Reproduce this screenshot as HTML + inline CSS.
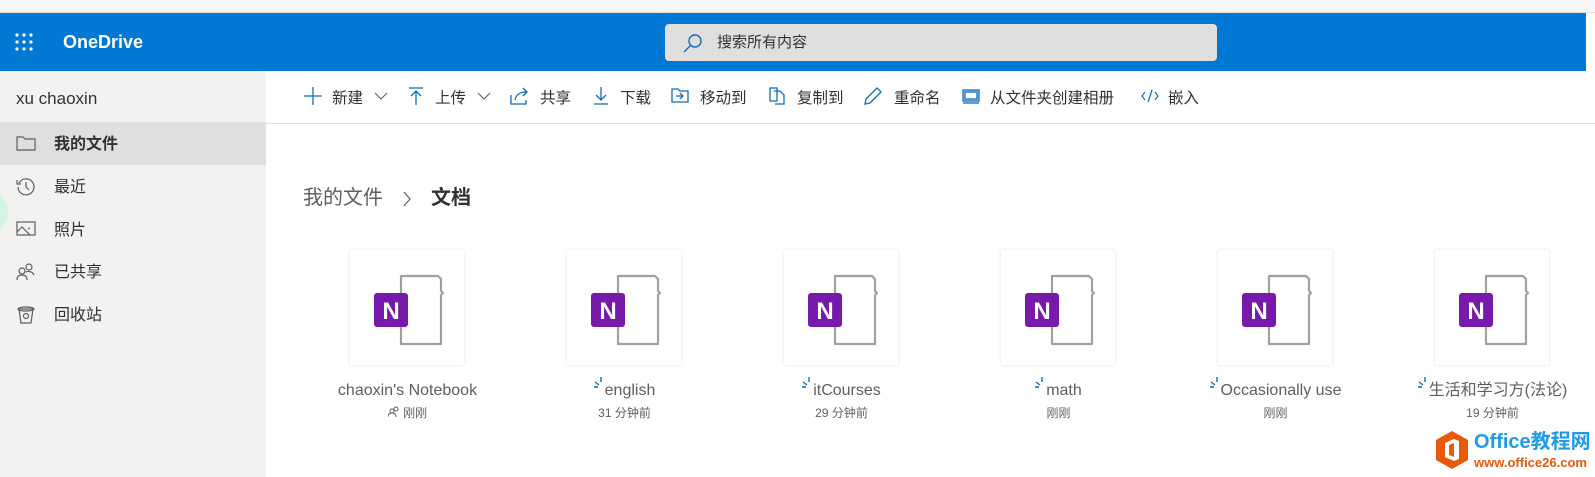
<!DOCTYPE html>
<html><head><meta charset="utf-8"><style>
*{margin:0;padding:0;box-sizing:border-box}
body{width:1595px;height:477px;overflow:hidden;background:#fff;font-family:"Liberation Sans","Noto Sans CJK SC",sans-serif;position:relative;color:#323130}
.top{position:absolute;left:0;top:0;width:1595px;height:13px;background:#f6f6f6;border-bottom:1px solid #e0e0e0}
.bar{position:absolute;left:0;top:13px;width:1586px;height:58px;background:#0078d4}
.brand{position:absolute;left:63px;top:32px;color:#fff;font-size:18px;font-weight:bold}
.search{position:absolute;left:665px;top:24px;width:552px;height:37px;background:#e1dfdd;border-radius:4px}
.search span{position:absolute;left:52px;top:9px;font-size:15px;line-height:20px;color:#323130}
.side{position:absolute;left:0;top:71px;width:266px;height:406px;background:#f3f2f1;overflow:hidden}
.user{position:absolute;left:16px;top:17px;font-size:17px;line-height:22px}
.item{position:absolute;left:0;width:266px;height:43px}
.item span{position:absolute;left:54px;top:12px;font-size:16px;line-height:22px}
.item svg{position:absolute;left:16px;top:12px}
.tb{position:absolute;left:266px;top:71px;width:1329px;height:53px;border-bottom:1px solid #e1dfdd}
.tb .b{position:absolute;top:17px;font-size:15.5px;line-height:22px;color:#323130;white-space:nowrap}
.tb svg{position:absolute;top:16px}
.bc{position:absolute;top:184px;font-size:20px;line-height:28px}
.tile{position:absolute;top:250px;width:114px;height:115px;background:#fff;box-shadow:0 0 3px rgba(0,0,0,.12)}
.tile svg{position:absolute;left:22px;top:22px}
.nm{position:absolute;top:380px;width:217px;text-align:center;font-size:16px;line-height:22px;color:#605e5c;white-space:nowrap}
.tm{position:absolute;top:405px;width:217px;text-align:center;font-size:12px;line-height:16px;color:#605e5c}
.sync{display:inline-block;width:10px;height:12px;position:relative;top:-6px;margin-right:1px}
</style></head><body>
<div class="top"></div>
<div class="bar"></div>
<svg style="position:absolute;left:15px;top:33px" width="20" height="18"><g fill="#fff"><circle cx="2" cy="2" r="1.6"/><circle cx="9" cy="2" r="1.6"/><circle cx="16" cy="2" r="1.6"/><circle cx="2" cy="9" r="1.6"/><circle cx="9" cy="9" r="1.6"/><circle cx="16" cy="9" r="1.6"/><circle cx="2" cy="16" r="1.6"/><circle cx="9" cy="16" r="1.6"/><circle cx="16" cy="16" r="1.6"/></g></svg>
<div class="brand">OneDrive</div>
<div class="search"><svg style="position:absolute;left:18px;top:10px" width="20" height="20" fill="none" stroke="#0f6cbd" stroke-width="1.4"><circle cx="12" cy="7" r="6"/><path d="M7.5 11.5L1 18"/></svg><span>搜索所有内容</span></div>

<div class="side">
<div class="user">xu chaoxin</div>
<div class="item" style="top:51px;background:#e1dfdd"><svg width="20" height="18" fill="none" stroke="#605e5c" stroke-width="1.2"><path d="M1 3h6l2 2h10v11H1z"/></svg><span style="font-weight:bold">我的文件</span></div>
<div class="item" style="top:94px"><svg width="20" height="20" fill="none" stroke="#605e5c" stroke-width="1.2"><path d="M3 6A8 8 0 1 1 2 10M1 3v4h4M10 5v5l3 3"/></svg><span>最近</span></div>
<div class="item" style="top:137px"><svg width="20" height="18" fill="none" stroke="#605e5c" stroke-width="1.2"><rect x="1" y="2" width="18" height="13"/><path d="M1 12l5-5 8 8M12 9l2-1"/></svg><span>照片</span></div>
<div class="item" style="top:179px"><svg width="20" height="20" fill="none" stroke="#605e5c" stroke-width="1.2"><circle cx="6" cy="9" r="3"/><circle cx="13" cy="5" r="3"/><path d="M1 18c0-4 2-5 5-5s5 1 5 5M10 10c2-1 6-1 8 3"/></svg><span>已共享</span></div>
<div class="item" style="top:222px"><svg width="20" height="20" fill="none" stroke="#605e5c" stroke-width="1.2"><path d="M2 4h16M3 4l2 14h10l2-14"/><ellipse cx="10" cy="4" rx="8" ry="2"/><circle cx="10" cy="11" r="2.5"/></svg><span>回收站</span></div>
<div style="position:absolute;left:-40px;top:117px;width:48px;height:48px;border-radius:50%;background:#d4f5e6"></div>
</div>

<div class="tb">
<svg style="left:38px" width="18" height="18" stroke="#0f6cbd" stroke-width="1.3"><path d="M9 0v18M0 9h18"/></svg><span class="b" style="left:66px">新建</span>
<svg style="left:108px;top:20px" width="14" height="10" fill="none" stroke="#605e5c"><path d="M1 2l6 6 6-6"/></svg>
<svg style="left:143px" width="14" height="18" fill="none" stroke="#0f6cbd" stroke-width="1.3"><path d="M0 1h14M7 4v14M2 9l5-5 5 5"/></svg><span class="b" style="left:169px">上传</span>
<svg style="left:211px;top:20px" width="14" height="10" fill="none" stroke="#605e5c"><path d="M1 2l6 6 6-6"/></svg>
<svg style="left:244px" width="20" height="18" fill="none" stroke="#0f6cbd" stroke-width="1.3"><path d="M1 8v9h15v-4M5 13c1-6 6-8 11-8M13 1l4 4-4 4"/></svg><span class="b" style="left:274px">共享</span>
<svg style="left:328px" width="14" height="18" fill="none" stroke="#0f6cbd" stroke-width="1.3"><path d="M7 0v13M2 8l5 5 5-5M0 17h14"/></svg><span class="b" style="left:354px">下载</span>
<svg style="left:405px;top:17px" width="18" height="15" fill="none" stroke="#0f6cbd" stroke-width="1.3"><path d="M1 1h6l2 2h8v11H1zM5 8h7M9 5l3 3-3 3"/></svg><span class="b" style="left:434px">移动到</span>
<svg style="left:503px" width="16" height="18" fill="none" stroke="#0f6cbd" stroke-width="1.3"><path d="M1 1h7v13H1zM5 4h6l4 4v9H6"/></svg><span class="b" style="left:531px">复制到</span>
<svg style="left:598px" width="18" height="18" fill="none" stroke="#0f6cbd" stroke-width="1.3"><path d="M13 1l4 4L6 16l-5 1 1-5z"/></svg><span class="b" style="left:628px">重命名</span>
<svg style="left:696px;top:18px" width="18" height="15" fill="none" stroke="#0f6cbd" stroke-width="1.3"><rect x="1" y="1" width="16" height="11" fill="#cfe3f7"/><rect x="3" y="3" width="12" height="7" fill="#fff"/><path d="M1 14h16"/></svg><span class="b" style="left:724px">从文件夹创建相册</span>
<svg style="left:875px" width="18" height="18" fill="none" stroke="#0f6cbd" stroke-width="1.2"><path d="M4 5L1 9l3 4M14 5l3 4-3 4M11 3L7 15"/></svg><span class="b" style="left:902px">嵌入</span>
</div>

<div class="bc" style="left:303px;color:#605e5c">我的文件</div>
<svg style="position:absolute;left:402px;top:191px" width="10" height="16" fill="none" stroke="#605e5c" stroke-width="1.2"><path d="M2 1l6 7-6 7"/></svg>
<div class="bc" style="left:431px;font-weight:bold;color:#323130">文档</div>

<svg width="0" height="0" style="position:absolute"><defs><g id="on"><path d="M29 4h37l3 3v12l2 2-2 2v49H29z" fill="#fff" stroke="#a0a0a0" stroke-width="2.2" stroke-linejoin="round"/><rect x="2" y="21" width="34" height="34" rx="3" fill="#7719aa"/><text x="19" y="47" text-anchor="middle" font-family="Liberation Sans" font-weight="bold" font-size="24" fill="#fff">N</text></g></defs></svg>

<div class="tile" style="left:350px"><svg width="80" height="80"><use href="#on"/></svg></div>
<div class="tile" style="left:567px"><svg width="80" height="80"><use href="#on"/></svg></div>
<div class="tile" style="left:784px"><svg width="80" height="80"><use href="#on"/></svg></div>
<div class="tile" style="left:1001px"><svg width="80" height="80"><use href="#on"/></svg></div>
<div class="tile" style="left:1218px"><svg width="80" height="80"><use href="#on"/></svg></div>
<div class="tile" style="left:1435px"><svg width="80" height="80"><use href="#on"/></svg></div>

<div class="nm" style="left:299px">chaoxin's Notebook</div>
<div class="tm" style="left:299px"><svg width="12" height="11" fill="none" stroke="#605e5c"><circle cx="4" cy="5" r="2"/><circle cx="8" cy="3" r="2"/><path d="M0 11c0-3 2-4 4-4s4 1 4 4"/></svg> 刚刚</div>
<div class="nm" style="left:516px"><svg class="sync"><path d="M7 0v5M1 5l4 3M0 10h4" stroke="#0f6cbd" stroke-width="1.4"/></svg>english</div>
<div class="tm" style="left:516px">31 分钟前</div>
<div class="nm" style="left:733px"><svg class="sync"><path d="M7 0v5M1 5l4 3M0 10h4" stroke="#0f6cbd" stroke-width="1.4"/></svg>itCourses</div>
<div class="tm" style="left:733px">29 分钟前</div>
<div class="nm" style="left:950px"><svg class="sync"><path d="M7 0v5M1 5l4 3M0 10h4" stroke="#0f6cbd" stroke-width="1.4"/></svg>math</div>
<div class="tm" style="left:950px">刚刚</div>
<div class="nm" style="left:1167px"><svg class="sync"><path d="M7 0v5M1 5l4 3M0 10h4" stroke="#0f6cbd" stroke-width="1.4"/></svg>Occasionally use</div>
<div class="tm" style="left:1167px">刚刚</div>
<div class="nm" style="left:1384px"><svg class="sync"><path d="M7 0v5M1 5l4 3M0 10h4" stroke="#0f6cbd" stroke-width="1.4"/></svg>生活和学习方(法论)</div>
<div class="tm" style="left:1384px">19 分钟前</div>

<svg style="position:absolute;left:1434px;top:430px" width="36" height="40"><path d="M18 1l16 9v20L18 39 2 30V10z" fill="#e8590c"/><path d="M11 13l9-4 5 2v18l-5 2-9-4z" fill="#fff"/><path d="M15 15l5-2v14l-5-2z" fill="#e8590c"/></svg>
<div style="position:absolute;left:1474px;top:430px;font-size:20px;line-height:24px;font-weight:bold;color:#1e9be9;white-space:nowrap">Office教程网</div>
<div style="position:absolute;left:1474px;top:455px;font-size:13px;line-height:16px;font-weight:bold;color:#e8590c;white-space:nowrap">www.office26.com</div>
</body></html>
